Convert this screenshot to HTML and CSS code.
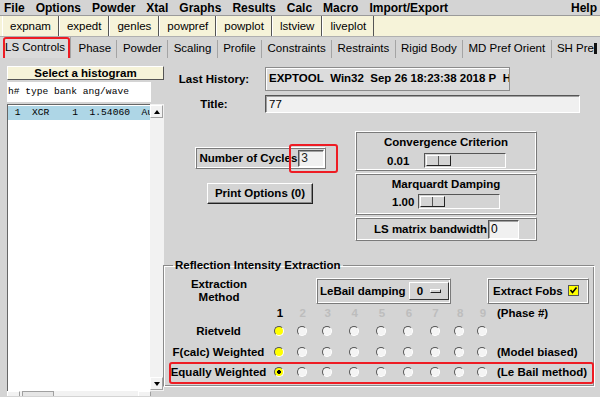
FILE: index.html
```html
<!DOCTYPE html>
<html lang="en">
 <head>
  <meta charset="utf-8">
  <title>EXPGUI</title>
  <link rel="stylesheet" href="styles.css">
 </head>
 <body>
  <div class="menubar">
   <span>File</span><span>Options</span><span>Powder</span><span>Xtal</span><span>Graphs</span><span>Results</span><span>Calc</span><span>Macro</span><span>Import/Export</span>
   <span class="help">Help</span>
  </div>
  <div class="toolbar">
   <div class="tbtn">expnam</div>
   <div class="tbtn">expedt</div>
   <div class="tbtn">genles</div>
   <div class="tbtn">powpref</div>
   <div class="tbtn">powplot</div>
   <div class="tbtn">lstview</div>
   <div class="tbtn">liveplot</div>
  </div>
  <div class="tabs">
   <div class="tab sel">LS Controls<span class="mark tabmark"></span></div>
   <div class="tab">Phase</div>
   <div class="tab">Powder</div>
   <div class="tab">Scaling</div>
   <div class="tab">Profile</div>
   <div class="tab">Constraints</div>
   <div class="tab">Restraints</div>
   <div class="tab">Rigid Body</div>
   <div class="tab">MD Pref Orient</div>
   <div class="tab last">SH Pre</div>
   <div class="tabarrow"></div>
  </div>

  <div class="main">
   <div class="hist">
    <div class="histhead">Select a histogram</div>
    <div class="histcols">h# type bank ang/wave</div>
    <div class="histbody">
     <div class="list">
      <div class="lrow sel"> 1  XCR    1  1.54060  Au</div>
     </div>
     <div class="vscroll">
      <div class="sbtn"><span class="tri up"></span></div>
      <div class="sbtn"><span class="tri down"></span></div>
     </div>
    </div>
    <div class="hscroll">
     <div class="sbtn small"></div>
     <div class="hthumb"></div>
     <div class="sbtn small right"></div>
    </div>
   </div>

   <div class="ls">
    <div class="info">
     <div class="lbl">Last History:</div>
     <div class="histbox">EXPTOOL&nbsp; Win32&nbsp; Sep 26 18:23:38 2018 P&nbsp; H</div>
     <div class="lbl">Title:</div>
     <div class="entry titlebox">77</div>
    </div>

    <div class="mid">
     <div class="midleft">
      <div class="cycles ridge">
       <span>Number of Cycles</span>
       <span class="entry cyc">3</span>
       <span class="mark cycmark"></span>
      </div>
      <div class="pbtn">Print Options (0)</div>
     </div>
     <div class="midright">
      <div class="ridge conv">
       <div class="btitle">Convergence Criterion</div>
       <div class="srow">
        <span class="sval">0.01</span>
        <div class="trough wide"><div class="thumb"><i></i><i></i></div></div>
       </div>
      </div>
      <div class="ridge conv marq">
       <div class="btitle">Marquardt Damping</div>
       <div class="srow">
        <span class="sval">1.00</span>
        <div class="trough"><div class="thumb"><i></i><i></i></div></div>
       </div>
      </div>
      <div class="ridge band">
       <span>LS matrix bandwidth</span>
       <span class="entry bw">0</span>
      </div>
     </div>
    </div>

    <fieldset class="rie">
     <legend>Reflection Intensity Extraction</legend>
     <div class="rtop">
      <div class="emeth">Extraction<br>Method</div>
      <div class="ridge lebail">LeBail damping <span class="mbtn">0 <span class="ind"></span></span></div>
      <div class="ridge fobs">Extract Fobs
       <svg class="chk" width="11" height="11" viewBox="0 0 11 11"><rect x="0.5" y="0.5" width="10" height="10" fill="#ffff00" stroke="#555"/><polyline points="2.5,5 4.5,7.5 8.5,2.5" fill="none" stroke="#000" stroke-width="1.6"/></svg>
      </div>
     </div>
     <div class="prow phead">
      <span></span><span>1</span><span class="dim">2</span><span class="dim">3</span><span class="dim">4</span><span class="dim">5</span><span class="dim">6</span><span class="dim">7</span><span class="dim">8</span><span class="dim">9</span><span class="note">(Phase #)</span>
     </div>
     <div class="prow">
      <span class="plabel">Rietveld</span>
      <span><i class="rb on"></i></span><span><i class="rb"></i></span><span><i class="rb"></i></span><span><i class="rb"></i></span><span><i class="rb"></i></span><span><i class="rb"></i></span><span><i class="rb"></i></span><span><i class="rb"></i></span><span><i class="rb"></i></span>
      <span class="note"></span>
     </div>
     <div class="prow">
      <span class="plabel">F(calc) Weighted</span>
      <span><i class="rb on"></i></span><span><i class="rb"></i></span><span><i class="rb"></i></span><span><i class="rb"></i></span><span><i class="rb"></i></span><span><i class="rb"></i></span><span><i class="rb"></i></span><span><i class="rb"></i></span><span><i class="rb"></i></span>
      <span class="note">(Model biased)</span>
     </div>
     <div class="prow eq">
      <span class="plabel">Equally Weighted</span>
      <span><i class="rb on dot"></i></span><span><i class="rb"></i></span><span><i class="rb"></i></span><span><i class="rb"></i></span><span><i class="rb"></i></span><span><i class="rb"></i></span><span><i class="rb"></i></span><span><i class="rb"></i></span><span><i class="rb"></i></span>
      <span class="note">(Le Bail method)</span>
     </div>
    </fieldset>
   </div>
  </div>
 </body>
</html>
```

FILE: styles.css
```css
* {
 box-sizing: border-box;
}

body {
 margin: 0;
 width: 600px;
 height: 397px;
 overflow: hidden;
 background: #d4d4d4;
 color: #000;
 font-family: "Liberation Sans", Arial, sans-serif;
 font-size: 11.5px;
}

/* annotation boxes */
.mark {
 position: absolute;
 border: 2px solid #ee1c24;
 border-radius: 3px;
}

/* menu + toolbar */
.menubar {
 display: flex;
 align-items: center;
 height: 16px;
 padding-left: 4px;
 font-size: 12px;
 font-weight: bold;
 border-bottom: 1px solid #9a9a9a;
}
.menubar span { margin-right: 11px; }
.menubar .help { margin-left: auto; margin-right: 3px; }

.toolbar {
 display: flex;
 height: 21px;
 padding-left: 2px;
 background: #f6f3d9;
 border-bottom: 1px solid #b0b0b0;
}
.tbtn {
 padding: 0 7px;
 line-height: 20px;
 border-left: 1px solid #fff;
 border-right: 1px solid #555;
}

/* notebook tabs */
.tabs {
 display: flex;
 align-items: flex-end;
 height: 21px;
 overflow: hidden;
 white-space: nowrap;
}
.tab {
 position: relative;
 flex-shrink: 0;
 height: 18px;
 line-height: 17px;
 padding: 0 5.4px;
 border-right: 1px solid #a4a4a4;
}
.tab.sel {
 height: 21px;
 line-height: 20px;
 padding: 0 5px 0 5px;
 margin-right: 2px;
 background: #dadada;
}
.tab.last { border-right: none; padding-right: 0; }
.tabmark { left: 3px; top: 0; width: 67px; height: 27px; }
.tabarrow {
 flex-shrink: 0;
 width: 3px;
 height: 11px;
 margin-bottom: 4px;
 background: #111;
}

.main {
 display: flex;
 height: 338px;
 padding-top: 8px;
 overflow: hidden;
}

/* histogram list */
.hist {
 width: 157px;
 margin-left: 7px;
 display: flex;
 flex-direction: column;
}
.hist > div { flex-shrink: 0; }
.histhead {
 height: 14px;
 line-height: 12px;
 text-align: center;
 font-weight: bold;
 background: #f6f3d9;
 border: 1px solid;
 border-color: #fff #555 #555 #fff;
}
.histcols {
 width: 144px;
 height: 20px;
 margin-top: 2px;
 padding-left: 1px;
 line-height: 20px;
 background: #fff;
 font-family: "Liberation Mono", "DejaVu Sans Mono", monospace;
 font-size: 9.6px;
 white-space: pre;
}
.histbody {
 display: flex;
 height: 287px;
 margin-top: 2px;
}
.list {
 width: 144px;
 background: #fff;
 border-top: 1px solid #666;
 border-left: 1px solid #666;
 padding-top: 1px;
 overflow: hidden;
}
.lrow {
 height: 14px;
 line-height: 14px;
 padding-left: 1px;
 font-family: "Liberation Mono", "DejaVu Sans Mono", monospace;
 font-size: 9.6px;
 white-space: pre;
}
.lrow.sel { background: #aed6e6; }
.vscroll {
 width: 14px;
 background: #f2f2f2;
 display: flex;
 flex-direction: column;
 justify-content: space-between;
 padding: 1px 0;
}
.sbtn {
 width: 13px;
 height: 13px;
 background: #f2f2f2;
 border: 1px solid;
 border-color: #fff #a0a0a0 #a0a0a0 #fff;
 display: flex;
 align-items: center;
 justify-content: center;
}
.tri {
 width: 0;
 height: 0;
 border-left: 3px solid transparent;
 border-right: 3px solid transparent;
}
.tri.up { border-bottom: 4px solid #000; }
.tri.down { border-top: 4px solid #000; }
.hscroll {
 display: flex;
 height: 14px;
 width: 144px;
 background: #f2f2f2;
 gap: 2px;
}
.hthumb {
 width: 32px;
 border: 1px solid #a0a0a0;
 background: #e6e6e6;
}
.sbtn.right { margin-left: auto; }

/* LS controls pane */
.ls {
 flex: 1;
 padding-left: 1px;
}
.info {
 display: grid;
 grid-template-columns: 98px auto;
 column-gap: 2px;
 row-gap: 4px;
 margin-top: 1px;
}
.lbl {
 align-self: center;
 text-align: center;
 font-weight: bold;
}
.histbox {
 width: 245px;
 height: 24px;
 padding-left: 3px;
 line-height: 21px;
 font-weight: bold;
 white-space: nowrap;
 overflow: hidden;
 background: #dcdcdc;
 border: 1px solid #8c8c8c;
 box-shadow: inset 1px 1px #fff;
}
.entry {
 background: #f0f0f0;
 border: 1px solid;
 border-color: #555 #fff #fff #555;
 box-shadow: inset 1px 1px #a0a0a0;
}
.titlebox {
 width: 315px;
 height: 18px;
 padding-left: 3px;
 line-height: 16px;
}

.ridge {
 border: 1px solid;
 border-color: #fff #7a7a7a #7a7a7a #fff;
 box-shadow: inset 1px 1px #7a7a7a, inset -1px -1px #fff;
}

.mid {
 display: flex;
 margin-top: 18px;
}
.midleft {
 width: 190px;
 display: flex;
 flex-direction: column;
 align-items: center;
 padding-top: 16px;
}
.cycles {
 position: relative;
 display: flex;
 align-items: center;
 width: 131px;
 height: 22px;
 padding-left: 4px;
 font-weight: bold;
}
.entry.cyc {
 width: 26px;
 height: 17px;
 margin-left: 1px;
 padding-left: 2px;
 line-height: 15px;
 font-weight: normal;
 font-size: 12px;
 color: #222;
}
.cycmark { left: 93px; top: -4px; width: 49px; height: 29px; }
.pbtn {
 width: 106px;
 height: 21px;
 margin-top: 14px;
 line-height: 18px;
 text-align: center;
 font-weight: bold;
 border: 1px solid;
 border-color: #fff #222 #222 #fff;
 box-shadow: inset -1px -1px #888;
}

.midright {
 width: 182px;
 display: flex;
 flex-direction: column;
 gap: 2px;
}
.conv {
 height: 40px;
 padding-top: 3px;
 font-weight: bold;
}
.conv.marq { height: 42px; }
.btitle { text-align: center; line-height: 14px; }
.srow {
 display: flex;
 align-items: center;
 margin-top: 4px;
 padding-left: 31px;
}
.marq .srow { padding-left: 36px; margin-top: 3px; }
.sval { width: 37px; }
.marq .sval { width: 26px; }
.trough {
 width: 82px;
 height: 15px;
 padding: 1px;
 border: 1px solid;
 border-color: #555 #fff #fff #555;
 display: flex;
}
.thumb {
 display: flex;
 width: 25px;
 border: 1px solid;
 border-color: #fff #222 #222 #fff;
}
.thumb i {
 flex: 1;
 border-right: 1px solid #555;
}
.thumb i:last-child { border-right: none; }
.band {
 display: flex;
 align-items: center;
 height: 24px;
 padding-left: 18px;
 font-weight: bold;
}
.entry.bw {
 width: 31px;
 height: 19px;
 margin-left: 1px;
 padding-left: 2px;
 line-height: 17px;
 font-weight: normal;
 font-size: 12px;
}

/* reflection intensity extraction frame */
.rie {
 width: 432px;
 margin: 17px 0 0 -2px;
 padding: 0 0 3px 0;
 border: 1px solid;
 border-color: #8a8a8a #fff #fff #8a8a8a;
 box-shadow: inset 1px 1px #fff, inset -1px -1px #8a8a8a;
 font-weight: bold;
}
.rie legend {
 margin-left: 9px;
 padding: 0 2px;
 line-height: 14px;
}
.rtop {
 display: flex;
 align-items: center;
 margin-top: 5px;
 height: 27px;
}
.emeth {
 width: 110px;
 text-align: center;
 line-height: 13px;
}
.lebail {
 display: flex;
 align-items: center;
 width: 135px;
 height: 26px;
 margin-left: 42px;
 padding-left: 3px;
}
.mbtn {
 display: flex;
 align-items: center;
 width: 40px;
 height: 18px;
 margin-left: 3px;
 padding-left: 7px;
 border: 1px solid;
 border-color: #fff #333 #333 #fff;
}
.ind {
 width: 11px;
 height: 4px;
 margin-left: 7px;
 border: 1px solid;
 border-color: #fff #222 #222 #fff;
}
.fobs {
 display: flex;
 align-items: center;
 width: 102px;
 height: 26px;
 margin-left: 36px;
 padding-left: 5px;
}
.chk { margin-left: 5px; }

.prow {
 position: relative;
 display: grid;
 grid-template-columns: 105px 22px 23.5px 26.5px 27.5px 27px 27px 26px 23.5px 22px auto;
 align-items: center;
 height: 20.5px;
}
.prow > span {
 display: flex;
 justify-content: center;
}
.prow .plabel, .prow .note { display: block; }
.prow .plabel { text-align: center; padding-left: 4px; }
.prow .note { padding-left: 3px; }
.phead { height: 16px; margin-top: 1px; }
.phead .dim { color: #bdbdbd; }
.eq::after {
 content: "";
 position: absolute;
 left: 5px;
 right: 0;
 top: 0;
 bottom: -1px;
 border: 2px solid #ee1c24;
 border-radius: 3px;
}
.rb {
 display: block;
 width: 10px;
 height: 10px;
 border-radius: 50%;
 border: 1px solid;
 border-color: #555 #fff #fff #555;
 background: #f4f4f4;
 margin-left: -2px;
}
.rb.on { background: #ffff00; }
.rb.dot {
 background: radial-gradient(circle, #000 0 1.6px, #ffff00 2.2px);
}
```
